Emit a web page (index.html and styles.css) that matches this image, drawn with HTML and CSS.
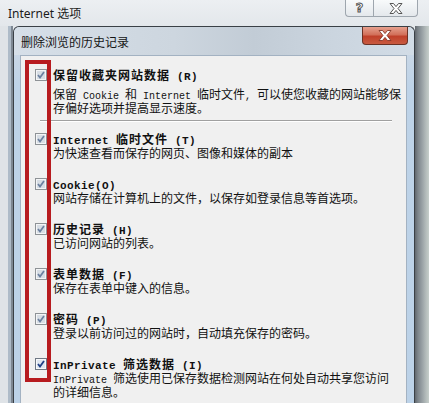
FILE: index.html
```html
<!DOCTYPE html>
<html>
<head>
<meta charset="utf-8">
<link rel="stylesheet" href="styles.css">
</head>
<body>
<div class="screen">
  <div class="outer-bar">
    <span class="outer-title">Internet 选项</span>
    <div class="caption-btns">
      <div class="cbtn help"><span class="qmark">?</span></div>
      <div class="cbtn xbtn">
        <svg width="14" height="11" viewBox="0 0 14 11"><path d="M1 0.5h3.5L7 3.6 9.5 0.5H13L9 5.5l4 5H9.5L7 7.4 4.5 10.5H1l4-5z" fill="#fff" stroke="#555" stroke-width="1"/></svg>
      </div>
    </div>
  </div>
  <div class="outer-body">
    <div class="left-frame"></div>
    <div class="dialog">
      <div class="dlg-bar">
        <span class="dlg-title">删除浏览的历史记录</span>
        <div class="dlg-close">
          <svg width="14" height="11" viewBox="0 0 14 11"><path d="M1 0.5h3.5L7 3.6 9.5 0.5H13L9 5.5l4 5H9.5L7 7.4 4.5 10.5H1l4-5z" fill="#fff" stroke="#7a2a1a" stroke-width="0.8"/></svg>
        </div>
      </div>
      <div class="panel">
        <div class="item first">
          <svg class="cb" width="12" height="12" viewBox="0 0 12 12"><rect x="0.5" y="0.5" width="11" height="11" fill="#f4f5f7" stroke="#8e9296"/><rect x="2" y="2" width="8" height="8" fill="#d7dde4"/><path d="M3 6l2 2.5 4-5.5" fill="none" stroke="#6a7f9f" stroke-width="1.7"/></svg>
          <div class="ttl">保留收藏夹网站数据<span class="mb"> (R)</span></div>
          <div class="desc">保留<span class="m"> Cookie </span>和<span class="m"> Internet </span>临时文件<span class="m">, </span>可以使您收藏的网站能够保<br>存偏好选项并提高显示速度。</div>
        </div>
        <div class="sep"></div>
        <div class="item">
          <svg class="cb" width="12" height="12" viewBox="0 0 12 12"><rect x="0.5" y="0.5" width="11" height="11" fill="#f4f5f7" stroke="#8e9296"/><rect x="2" y="2" width="8" height="8" fill="#d7dde4"/><path d="M3 6l2 2.5 4-5.5" fill="none" stroke="#6a7f9f" stroke-width="1.7"/></svg>
          <div class="ttl"><span class="mb">Internet </span>临时文件<span class="mb"> (T)</span></div>
          <div class="desc">为快速查看而保存的网页、图像和媒体的副本</div>
        </div>
        <div class="item">
          <svg class="cb" width="12" height="12" viewBox="0 0 12 12"><rect x="0.5" y="0.5" width="11" height="11" fill="#f4f5f7" stroke="#8e9296"/><rect x="2" y="2" width="8" height="8" fill="#d7dde4"/><path d="M3 6l2 2.5 4-5.5" fill="none" stroke="#6a7f9f" stroke-width="1.7"/></svg>
          <div class="ttl"><span class="mb">Cookie(O)</span></div>
          <div class="desc">网站存储在计算机上的文件，以保存如登录信息等首选项。</div>
        </div>
        <div class="item">
          <svg class="cb" width="12" height="12" viewBox="0 0 12 12"><rect x="0.5" y="0.5" width="11" height="11" fill="#f4f5f7" stroke="#8e9296"/><rect x="2" y="2" width="8" height="8" fill="#d7dde4"/><path d="M3 6l2 2.5 4-5.5" fill="none" stroke="#6a7f9f" stroke-width="1.7"/></svg>
          <div class="ttl">历史记录<span class="mb"> (H)</span></div>
          <div class="desc">已访问网站的列表。</div>
        </div>
        <div class="item">
          <svg class="cb" width="12" height="12" viewBox="0 0 12 12"><rect x="0.5" y="0.5" width="11" height="11" fill="#f4f5f7" stroke="#8e9296"/><rect x="2" y="2" width="8" height="8" fill="#d7dde4"/><path d="M3 6l2 2.5 4-5.5" fill="none" stroke="#6a7f9f" stroke-width="1.7"/></svg>
          <div class="ttl">表单数据<span class="mb"> (F)</span></div>
          <div class="desc">保存在表单中键入的信息。</div>
        </div>
        <div class="item">
          <svg class="cb" width="12" height="12" viewBox="0 0 12 12"><rect x="0.5" y="0.5" width="11" height="11" fill="#f4f5f7" stroke="#8e9296"/><rect x="2" y="2" width="8" height="8" fill="#d7dde4"/><path d="M3 6l2 2.5 4-5.5" fill="none" stroke="#6a7f9f" stroke-width="1.7"/></svg>
          <div class="ttl">密码<span class="mb"> (P)</span></div>
          <div class="desc">登录以前访问过的网站时，自动填充保存的密码。</div>
        </div>
        <div class="item">
          <svg class="cb" width="12" height="12" viewBox="0 0 12 12"><rect x="0.5" y="0.5" width="11" height="11" fill="#f8f9fb" stroke="#6f7884"/><rect x="2" y="2" width="8" height="8" fill="#dfe6ef"/><path d="M3 6l2 2.5 4-5.5" fill="none" stroke="#1f3f86" stroke-width="1.8"/></svg>
          <div class="ttl"><span class="mb">InPrivate </span>筛选数据<span class="mb"> (I)</span></div>
          <div class="desc"><span class="m">InPrivate </span>筛选使用已保存数据检测网站在何处自动共享您访问<br>的详细信息。</div>
        </div>
      </div>
    </div>
    <div class="right-frame"></div>
  </div>
  <div class="annot"></div>
</div>
</body>
</html>
```

FILE: styles.css
```css
html, body {
  margin: 0;
  padding: 0;
}
body {
  width: 429px;
  height: 403px;
  overflow: hidden;
  font-family: "Noto Sans CJK SC", sans-serif;
}
.screen {
  position: relative;
  width: 429px;
  height: 403px;
  background: #e6eaee;
  display: flex;
  flex-direction: column;
  overflow: hidden;
}
.outer-bar {
  height: 26px;
  flex: none;
  display: flex;
  justify-content: space-between;
  align-items: flex-start;
  padding: 0 11px 0 8px;
  background: linear-gradient(#eceff2, #e3e7eb);
}
.outer-title {
  font-family: "Noto Sans", "Noto Sans CJK SC", sans-serif;
  font-size: 12px;
  line-height: 16px;
  margin-top: 6px;
  color: #1b1b1b;
}
.caption-btns {
  display: flex;
}
.cbtn {
  height: 17px;
  border: 1px solid #9ea6ae;
  border-top: none;
  background: linear-gradient(#f8fafb, #e4e8ec);
  display: flex;
  align-items: center;
  justify-content: center;
  box-sizing: border-box;
}
.help {
  width: 28px;
  border-right: none;
  border-radius: 0 0 0 4px;
}
.xbtn {
  width: 45px;
  border-radius: 0 0 4px 0;
}
.qmark {
  font-family: "DejaVu Sans", sans-serif;
  font-weight: 700;
  font-size: 13px;
  line-height: 14px;
  color: #fff;
  -webkit-text-stroke: 1px #555;
}
.outer-body {
  flex: 1;
  display: flex;
  min-height: 0;
}
.left-frame {
  width: 13px;
  flex: none;
  background: linear-gradient(to right, #dfe3e7 0, #dfe3e7 8px, #aebbc8 8px, #aebbc8 11px, #7d8792 11px, #7d8792 13px);
}
.right-frame {
  width: 14px;
  flex: none;
  background: linear-gradient(to right, #62686e 0, #7e868c 3px, #98a0a4 7px, #b4bcbb 11px, #c6ceca 14px);
}
.dialog {
  width: 402px;
  flex: none;
  box-sizing: border-box;
  border: 1px solid #3a4046;
  border-bottom: none;
  border-radius: 6px 6px 0 0;
  background: linear-gradient(to bottom, #d3dde8 0, #c9d7e6 28px, #bed3e8 60px, #bcd2e8 100%);
  display: flex;
  flex-direction: column;
}
.dlg-bar {
  height: 28px;
  flex: none;
  display: flex;
  justify-content: space-between;
  align-items: flex-start;
  padding: 0 6px 0 7px;
  border-radius: 6px 6px 0 0;
  background: linear-gradient(to right, #d6dfe8 0, #cdd6df 40%, #c2ccd6 60%, #cbd5df 80%, #d2dce6 100%);
}
.dlg-title {
  font-size: 12px;
  line-height: 16px;
  margin-top: 7px;
  color: #151515;
}
.dlg-close {
  width: 46px;
  height: 18px;
  box-sizing: border-box;
  border: 1px solid #6b3124;
  border-top: none;
  border-radius: 0 0 4px 4px;
  background: linear-gradient(#e6a08e 0, #d2705a 45%, #c0402a 55%, #c85a40 100%);
  display: flex;
  align-items: center;
  justify-content: center;
}
.panel {
  flex: 1;
  margin: 0 7px 0 6px;
  border: 1px solid #a3b2c2;
  border-bottom: none;
  background: #f0f0f0;
  padding: 12px 0 0 14px;
}
.item {
  display: grid;
  grid-template-columns: 12px auto;
  grid-template-rows: 14px auto;
  column-gap: 6px;
  align-items: start;
}
.item + .item {
  margin-top: 18px;
}
.cb {
  grid-column: 1;
  grid-row: 1;
  margin-top: 1px;
}
.ttl {
  grid-column: 2;
  grid-row: 1;
  height: 14px;
  font-size: 12px;
  line-height: 14px;
  font-weight: 700;
  letter-spacing: 1px;
  color: #111;
  white-space: nowrap;
}
.desc {
  grid-column: 2;
  grid-row: 2;
  font-size: 12px;
  line-height: 13px;
  color: #111;
  white-space: nowrap;
}
.first .desc {
  margin-top: 5px;
}
.m {
  font-family: "Liberation Mono", monospace;
  font-size: 10px;
  line-height: 8px;
  letter-spacing: 0;
}
.mb {
  font-family: "Liberation Mono", monospace;
  font-size: 11px;
  line-height: 8px;
  font-weight: 700;
  letter-spacing: 0.4px;
}
.sep {
  height: 0;
  border-top: 1px solid #a0a0a0;
  border-bottom: 1px solid #ffffff;
  margin: 6px 14px 10px 5px;
}
.annot {
  position: absolute;
  left: 25px;
  top: 60px;
  width: 26px;
  height: 322px;
  box-sizing: border-box;
  border: 4px solid #b71b1f;
}
```
